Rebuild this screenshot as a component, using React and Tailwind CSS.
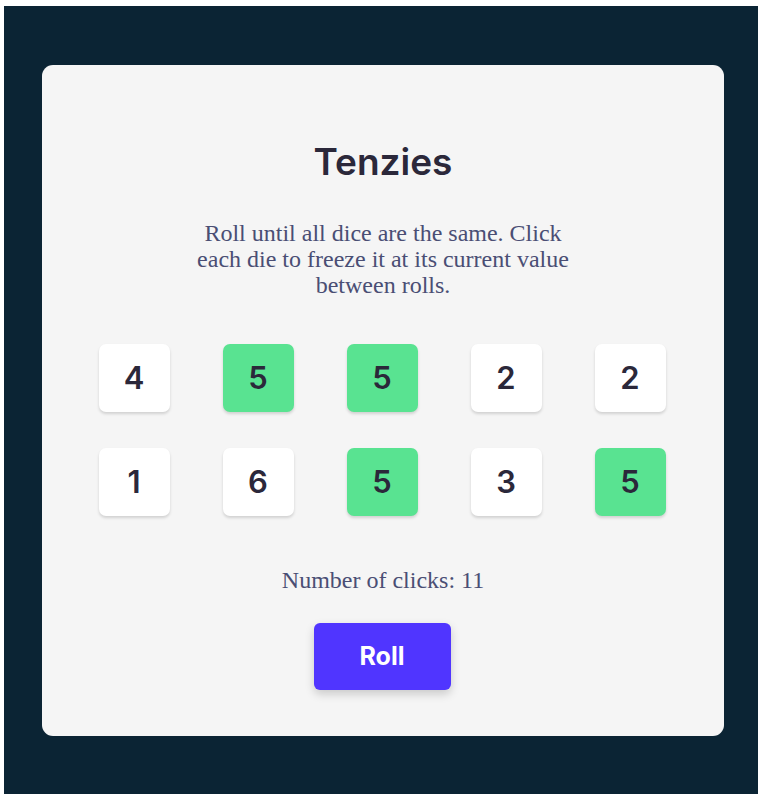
const dice = [
  { v: 4, held: false },
  { v: 5, held: true },
  { v: 5, held: true },
  { v: 2, held: false },
  { v: 2, held: false },
  { v: 1, held: false },
  { v: 6, held: false },
  { v: 5, held: true },
  { v: 3, held: false },
  { v: 5, held: true },
];

function Die({ value, held }) {
  return (
    <button
      className={`w-[71px] h-[68px] rounded-[7px] flex items-center justify-center font-['Inter',sans-serif] text-[31px] font-semibold text-[#2B283A] shadow-[0_2px_3px_rgba(0,0,0,0.15)] ${
        held ? 'bg-[#59E391]' : 'bg-white'
      }`}
    >
      {value}
    </button>
  );
}

export default function App() {
  return (
    <div className="w-[760px] h-[795px] bg-white pt-[6px] pl-[4px] pr-[2px] pb-[1px]">
      <div className="w-full h-full bg-[#0B2434] pt-[59px] pl-[38px] pr-[34px] pb-[58px]">
        <main className="w-full h-full bg-[#F5F5F5] rounded-[11px] flex flex-col items-center pt-[74px]">
          <h1 className="font-['Inter',sans-serif] text-[37px] leading-[46px] font-semibold text-[#2B283A]">
            Tenzies
          </h1>
          <p className="mt-[35px] max-w-[390px] text-center font-['Liberation_Serif',serif] text-[24px] leading-[26px] text-[#4A4E74]">
            Roll until all dice are the same. Click each die to freeze it at its current value between rolls.
          </p>
          <div className="mt-[46px] -translate-x-[1px] grid grid-cols-5 gap-x-[53px] gap-y-[36px]">
            {dice.map((d, i) => (
              <Die key={i} value={d.v} held={d.held} />
            ))}
          </div>
          <p className="mt-[51px] font-['Liberation_Serif',serif] text-[24px] leading-[26px] text-[#4A4E74]">
            Number of clicks: 11
          </p>
          <button className="mt-[30px] -translate-x-[1px] w-[137px] h-[67px] rounded-[6px] bg-[#5035FF] font-['Inter',sans-serif] text-white text-[25px] font-bold shadow-[0_4px_10px_rgba(0,0,0,0.18)]">
            Roll
          </button>
        </main>
      </div>
    </div>
  );
}
